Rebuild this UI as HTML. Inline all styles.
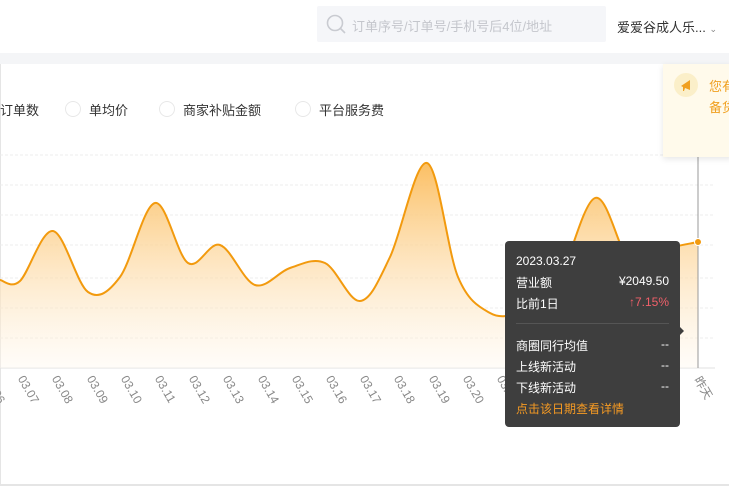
<!DOCTYPE html>
<html><head><meta charset="utf-8"><style>
body{margin:0;width:729px;height:486px;overflow:hidden;background:#fff;font-family:"Liberation Sans","Noto Sans CJK SC",sans-serif;position:relative}
.band{position:absolute;left:0;top:53px;width:729px;height:11px;background:#f4f5f7}
.search{position:absolute;left:317px;top:6px;width:289px;height:36px;background:#f5f6f9;border-radius:2px}
.search span{position:absolute;left:35px;top:10px;font-size:13px;color:#c4c6cc}
.shop{position:absolute;left:617px;top:17px;font-size:13px;color:#333}
.opt{position:absolute;top:100px;font-size:13px;color:#333}
.rad{position:absolute;top:101px;width:14px;height:14px;border:1px solid #e8e8e8;border-radius:50%}
.notice{position:absolute;left:663px;top:64px;width:70px;height:93px;background:#fffaeb;box-shadow:0 2px 6px rgba(0,0,0,.1);overflow:hidden}
.notice .ic{position:absolute;left:11px;top:9px;width:24px;height:24px;border-radius:50%;background:#fbefc9}
.notice .t{position:absolute;left:46px;top:12px;font-size:13px;line-height:21px;color:#f0a020;white-space:nowrap;width:200px}
.tip{position:absolute;left:505px;top:241px;width:175px;height:186px;background:#3e3e3e;border-radius:4px;color:#fff;font-size:12px}
.tip div{position:absolute;left:11px;right:11px}
.tip b{font-weight:normal;float:right}
.lbl{position:absolute;font-size:12px;color:#888;transform-origin:0 0;transform:rotate(60deg);white-space:nowrap}
</style></head><body>
<div style="position:absolute;left:0;top:64px;width:1px;height:422px;background:#e5e5e5"></div>
<div style="position:absolute;left:0;top:484px;width:729px;height:2px;background:#e5e5e5"></div>
<div class="search"><svg width="24" height="24" style="position:absolute;left:8px;top:7px"><circle cx="10" cy="10" r="7.5" fill="none" stroke="#c9cbd1" stroke-width="1.6"/><path d="M15.5 15.5L20 20" stroke="#c9cbd1" stroke-width="1.6"/></svg><span>订单序号/订单号/手机号后4位/地址</span></div>
<div class="shop">爱爱谷成人乐... <span style="font-size:9px;color:#888">⌄</span></div>
<div class="band"></div>
<div class="opt" style="left:0">订单数</div>
<div class="rad" style="left:65px"></div><div class="opt" style="left:89px">单均价</div>
<div class="rad" style="left:159px"></div><div class="opt" style="left:183px">商家补贴金额</div>
<div class="rad" style="left:295px"></div><div class="opt" style="left:319px">平台服务费</div>
<svg width="729" height="486" style="position:absolute;left:0;top:0">
<defs><linearGradient id="g" x1="0" y1="0" x2="0" y2="1"><stop offset="0" stop-color="#fbbf63"/><stop offset="1" stop-color="#fff8ee" stop-opacity=".4"/></linearGradient></defs>
<g stroke="#ececec" stroke-dasharray="3,2">
<line x1="0" x2="715" y1="155" y2="155"/><line x1="0" x2="715" y1="185" y2="185"/><line x1="0" x2="715" y1="215" y2="215"/><line x1="0" x2="715" y1="245" y2="245"/><line x1="0" x2="715" y1="278" y2="278"/><line x1="0" x2="715" y1="308" y2="308"/><line x1="0" x2="715" y1="338" y2="338"/></g>
<line x1="0" x2="715" y1="368" y2="368" stroke="#e2e2e2"/>
<path id="area" fill="url(#g)"/><path id="ln" fill="none" stroke="#f29a0e" stroke-width="2"/>
<line x1="698" x2="698" y1="157" y2="368" stroke="#999"/>
<circle cx="698" cy="242" r="3.5" fill="#f29a0e" stroke="#fff"/>
</svg>
<div class="notice"><div class="ic"><svg width="24" height="24"><path d="M7 13L16 7V17L11 15L10 18H9L9 14Z" fill="#f0a020"/></svg></div><div class="t">您有<br>备货</div></div>
<div id="labels"></div>
<div style="position:absolute;left:679px;top:326px;width:0;height:0;border:5px solid transparent;border-left-color:#3e3e3e"></div>
<div class="tip">
<div style="top:13px">2023.03.27</div>
<div style="top:33px">营业额<b>¥2049.50</b></div>
<div style="top:54px">比前1日<b style="color:#f0606a">↑7.15%</b></div>
<div style="top:82px;height:1px;background:#555"></div>
<div style="top:96px">商圈同行均值<b>--</b></div>
<div style="top:117px">上线新活动<b>--</b></div>
<div style="top:138px">下线新活动<b>--</b></div>
<div style="top:159px;color:#f59a23">点击该日期查看详情</div>
</div>
<script>
var p=[[0,280],[20,281],[53,231],[88,292],[120,277],[155,203],[188,263],[220,245],[255,285],[290,268],[325,263],[360,301],[390,257],[427,163],[458,277],[490,313],[520,312],[555,290],[595,198],[630,262],[660,250],[698,242]];
var d="M"+p[0];
for(var i=0;i<p.length-1;i++){var a=p[i-1]||p[i],b=p[i],c=p[i+1],e=p[i+2]||c;
d+=" C"+(b[0]+(c[0]-a[0])/6)+","+(b[1]+(c[1]-a[1])/6)+" "+(c[0]-(e[0]-b[0])/6)+","+(c[1]-(e[1]-b[1])/6)+" "+c[0]+","+c[1];}
document.getElementById('ln').setAttribute('d',d);
document.getElementById('area').setAttribute('d',d+" L698,368 L0,368Z");
var h="",labs=["03.06","03.07","03.08","03.09","03.10","03.11","03.12","03.13","03.14","03.15","03.16","03.17","03.18","03.19","03.20","03.21","03.22","03.23","03.24","03.25","昨天"];
for(var i=0;i<labs.length;i++){var x=i==20?700:(-12+i*34.2);h+='<div class="lbl" style="left:'+(x+5)+'px;top:373px">'+labs[i]+'</div>';}
document.getElementById('labels').innerHTML=h;
</script>
</body></html>
